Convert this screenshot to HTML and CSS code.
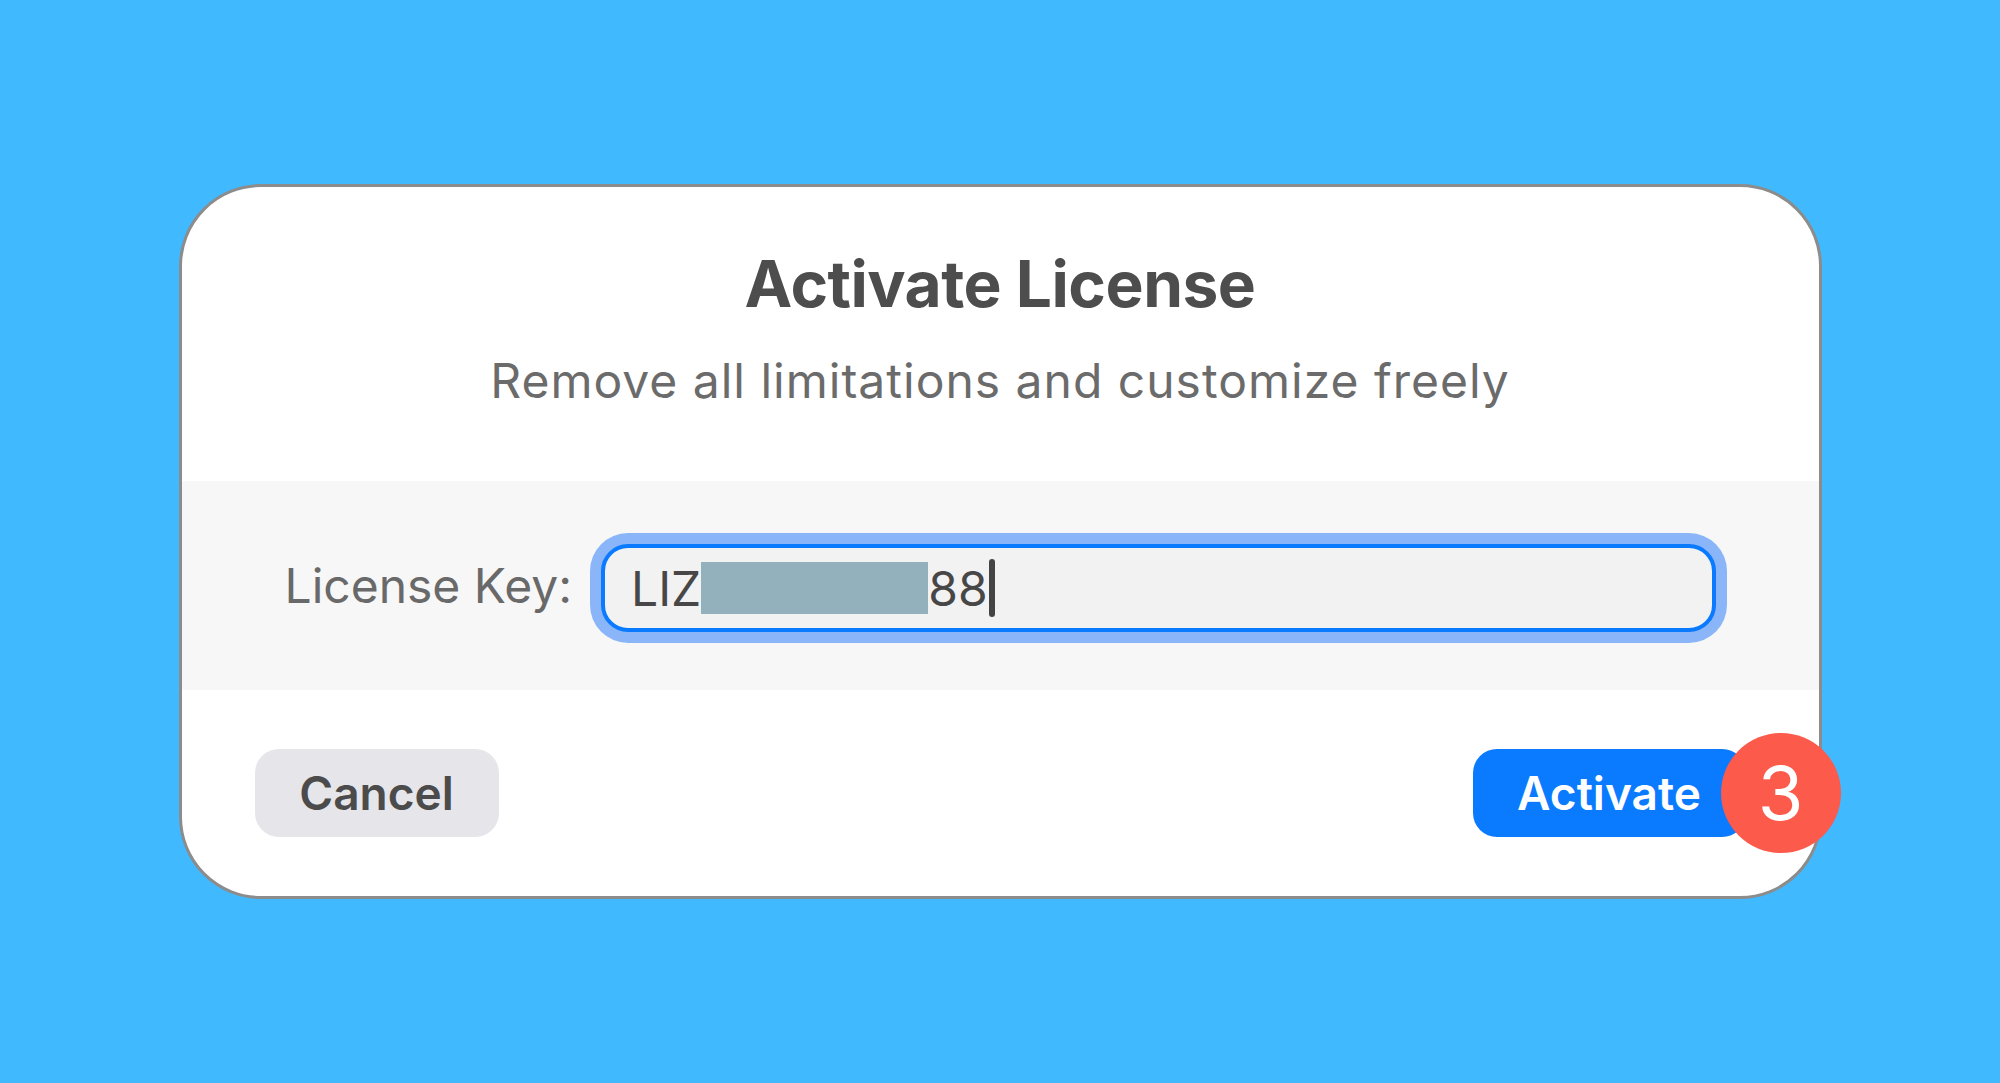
FILE: index.html
```html
<!DOCTYPE html>
<html lang="en">
<head>
<meta charset="utf-8">
<title>Activate License</title>
<link rel="stylesheet" href="styles.css">
</head>
<body>
<div class="stage">
  <div class="dialog">
    <div class="header">
      <h1 class="title">Activate License</h1>
      <p class="subtitle">Remove all limitations and customize freely</p>
    </div>
    <div class="band">
      <label class="label">License Key:</label>
      <div class="field">
        <span class="key">LIZ</span><span class="redact"></span><span class="key">88</span><span class="caret"></span>
      </div>
    </div>
    <div class="footer">
      <button class="btn btn-cancel">Cancel</button>
      <button class="btn btn-primary">Activate<span class="badge">3</span></button>
    </div>
  </div>
</div>
</body>
</html>
```

FILE: styles.css
```css
* { box-sizing: border-box; }
html, body { margin: 0; padding: 0; }
body {
  background: #41b9fe;
  font-family: Inter, "Liberation Sans", sans-serif;
}
.stage {
  width: 2000px;
  height: 1083px;
  display: flex;
  align-items: center;
  justify-content: center;
}
.dialog {
  width: 1643px;
  height: 715px;
  background: #ffffff;
  border: 3px solid #8c8c8c;
  border-radius: 82px;
  display: flex;
  flex-direction: column;
}
.header {
  height: 294px;
  padding-top: 65px;
  display: flex;
  flex-direction: column;
  align-items: center;
}
.title {
  margin: 0;
  font-size: 64px;
  line-height: 1;
  font-weight: 700;
  color: #4d4d4d;
  letter-spacing: -0.5px;
}
.subtitle {
  margin: 41px 0 0;
  font-size: 48px;
  line-height: 1;
  font-weight: 400;
  color: #6b6b6b;
  letter-spacing: 1px;
}
.band {
  height: 209px;
  background: #f7f7f7;
  display: flex;
  align-items: center;
  padding: 0 103px 0 103px;
  gap: 29px;
}
.label {
  font-size: 48px;
  line-height: 1;
  color: #696969;
  white-space: nowrap;
  margin-top: 0;
}
.field {
  flex: 1;
  height: 88px;
  margin-top: 5px;
  border: 4px solid #0a7aff;
  border-radius: 27px;
  box-shadow: 0 0 0 11px #8ab6f9;
  background: #f2f2f2;
  display: flex;
  align-items: center;
  padding-left: 26px;
}
.key {
  font-size: 48px;
  line-height: 1;
  color: #474747;
  margin-top: 2px;
}
.redact {
  display: inline-block;
  width: 227px;
  height: 52px;
  background: #93b1bd;
}
.caret {
  display: inline-block;
  width: 6px;
  height: 58px;
  background: #444444;
  border-radius: 3px;
  margin-left: 1px;
}
.footer {
  flex: 1;
  display: flex;
  justify-content: space-between;
  align-items: flex-start;
  padding: 59px 73px 0 73px;
}
.btn {
  height: 88px;
  border: none;
  border-radius: 24px;
  font-family: Inter, "Liberation Sans", sans-serif;
  font-size: 46px;
  font-weight: 600;
  line-height: 1;
  padding: 0;
  display: flex;
  align-items: center;
  justify-content: center;
}
.btn-cancel {
  width: 244px;
  background: #e5e5ea;
  color: #4b4b4b;
}
.btn-primary {
  width: 273px;
  background: #0a7aff;
  color: #ffffff;
  position: relative;
}
.badge {
  position: absolute;
  right: -95px;
  top: -16px;
  width: 120px;
  height: 120px;
  border-radius: 50%;
  background: #fc5a4b;
  color: #ffffff;
  font-size: 74px;
  font-weight: 400;
  display: flex;
  align-items: center;
  justify-content: center;
}
```
